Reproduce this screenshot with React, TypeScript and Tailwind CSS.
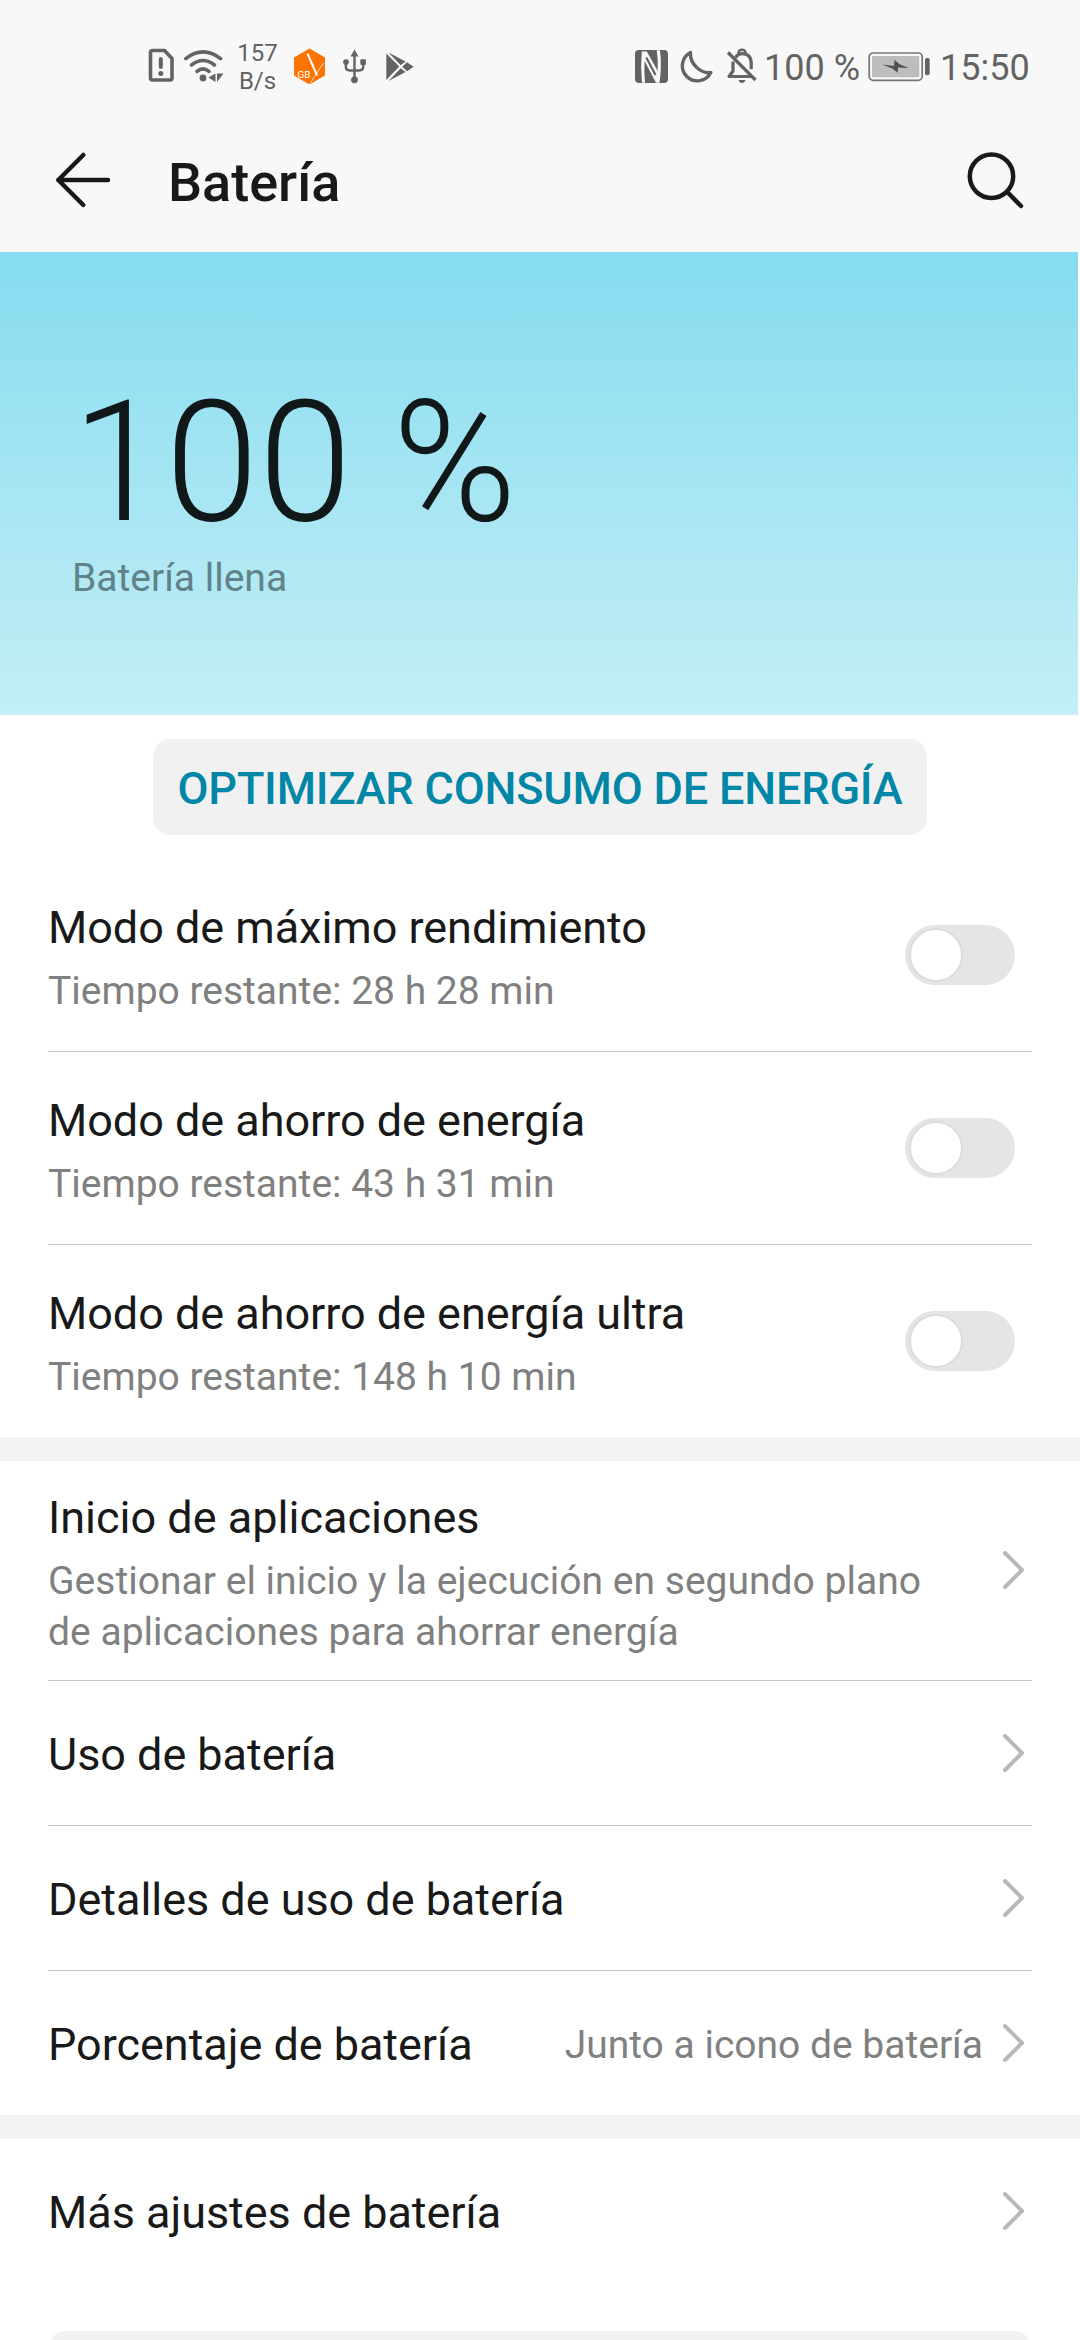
import type { ReactNode } from "react";

const G = "#636363";

function SimIcon() {
  return (
    <svg className="ml-[148px] h-9 w-[26px] shrink-0" viewBox="148 48 26 36" fill="none">
      <path d="M152 50.5h12.5l7.5 8V78a2 2 0 0 1-2 2h-17.500a2 2 0 0 1-2-2V52.500a2 2 0 0 1 2-2z" stroke={G} strokeWidth="3.600" strokeLinejoin="round" />
      <path d="M160.800 59v8" stroke={G} strokeWidth="4" strokeLinecap="round" />
      <circle cx="160.800" cy="73.500" r="2.500" fill={G} />
    </svg>
  );
}

function WifiIcon() {
  return (
    <svg className="ml-[10px] h-9 w-10 shrink-0" viewBox="184 48 40 36" fill="none">
      <g stroke={G} strokeWidth="3.600" strokeLinecap="round">
        <path d="M185.800 58.600Q203 45 220.500 58.600" />
        <path d="M191.500 65Q203 56 214.500 65" />
        <path d="M197 71.300Q203 66.500 209 71.300" />
      </g>
      <circle cx="203" cy="78" r="3.400" fill={G} />
      <path d="M215.500 73.500v8.500L208.500 77.500zM217 73.500h6.500L217 82z" fill={G} />
    </svg>
  );
}

function HexIcon() {
  return (
    <svg className="ml-4 h-9 w-8 shrink-0" viewBox="294 48 32 36">
      <path d="M309.500 48.500L325 57.500v18L309.500 84.500 294 75.500v-18z" fill="#ff7300" />
      <path d="M307.500 53.500L317 75.500" stroke="#fff" strokeWidth="2" />
      <path d="M323.500 63L310 83.500" stroke="#ffe3c8" strokeWidth="0.900" />
      <text x="297.500" y="77.800" fill="#fff" fontSize="9.500" fontFamily="Roboto, sans-serif" textLength="13" lengthAdjust="spacingAndGlyphs">GB</text>
    </svg>
  );
}

function UsbIcon() {
  return (
    <svg className="ml-4 h-9 w-6 shrink-0" viewBox="342 48 24 36" fill="none">
      <path d="M354.500 54v26M345.800 62v4.500q0 4 4 4h9.400q4 0 4-4V62" stroke={G} strokeWidth="2.400" />
      <path d="M354.500 49.500l4 7h-8z" fill={G} />
      <rect x="343.200" y="59.300" width="5.600" height="5.600" rx="2.300" fill={G} />
      <rect x="360.300" y="59.300" width="5.600" height="5.600" rx="1" fill={G} />
      <circle cx="354.500" cy="79.800" r="3.400" fill={G} />
    </svg>
  );
}

function PlayIcon() {
  return (
    <svg className="ml-5 h-9 w-7 shrink-0" viewBox="386 48 28 36" fill={G}>
      <path d="M386.300 53.500L399.300 66.500 386.300 80z" />
      <path d="M388.500 52.500L405.500 61.500 400.700 65.200z" />
      <path d="M388.500 81L400.700 68.200 405.500 72z" />
      <path d="M407 62.300L413.600 66.700 407 71.200 402.200 66.700z" />
    </svg>
  );
}

function NfcIcon() {
  return (
    <svg className="h-9 w-[34px] shrink-0" viewBox="635 48 34 36">
      <rect x="635" y="50" width="33" height="33" rx="4" fill={G} />
      <path d="M641.800 51.500Q640.300 67 642 82.800h3Q644 72 644.600 61L656 82.800h3.500Q662 66 660 50.200h-3.300Q658.300 60 657.700 71L646.800 51.500z" fill="#f8f8f8" />
      <path d="M646.300 57.500L655.500 75" stroke={G} strokeWidth="2.200" />
    </svg>
  );
}

function MoonIcon() {
  return (
    <svg className="ml-[11px] h-9 w-[34px] shrink-0" viewBox="680 48 34 36" fill="none">
      <path d="M690.500 52.500A15 15 0 1 0 710.800 72.500C701 74 689.500 64 690.500 52.500z" stroke={G} strokeWidth="3.400" strokeLinejoin="round" />
    </svg>
  );
}

function BellOffIcon() {
  return (
    <svg className="ml-3 h-9 w-[31px] shrink-0" viewBox="726 48 31 36" fill="none">
      <path d="M733 61.500v9.500l-4 5.500h23M735.500 57.500Q738 53.700 742 53.700q9.200 0 9.200 10v5.500" stroke={G} strokeWidth="3.200" strokeLinejoin="round" />
      <path d="M738.500 54v-1.500a3.500 2.800 0 0 1 7 0V54" stroke={G} strokeWidth="2.400" />
      <path d="M738.500 80h7q-1 3-3.500 3t-3.500-3z" fill={G} />
      <path d="M728 52.500L755.500 80" stroke={G} strokeWidth="3.200" />
    </svg>
  );
}

function BatteryIcon() {
  return (
    <svg className="h-9 w-[62px] shrink-0" viewBox="868 48 62 36" fill="none">
      <rect x="869.200" y="53" width="53" height="27.300" rx="4" stroke="#757575" strokeWidth="1.700" />
      <rect x="872" y="56" width="47.300" height="21.300" rx="1" fill="#bdbdbd" />
      <path d="M882.500 64.500l11.500 1.500.500-6.200 5 4.500 9.300 3.700-10.800-.6-.3 5.400-5.500-4.300z" fill="#4f4f4f" />
      <rect x="925" y="58" width="4.700" height="17.300" rx="1.800" fill={G} />
    </svg>
  );
}

function StatusBar() {
  return (
    <div className="flex h-[132px] items-center text-[#636363]">
      <SimIcon />
      <WifiIcon />
      <div className="ml-3 flex w-[42px] flex-col items-center pt-px pl-px text-[24px] leading-[28px]">
        <span>157</span>
        <span>B/s</span>
      </div>
      <HexIcon />
      <UsbIcon />
      <PlayIcon />
      <div className="ml-auto flex w-[445px] items-center text-[36px]">
        <NfcIcon />
        <MoonIcon />
        <BellOffIcon />
        <span className="ml-[7px] w-[104px] pt-1 leading-9 whitespace-nowrap">100 %</span>
        <BatteryIcon />
        <span className="ml-[10px] pt-1 leading-9 whitespace-nowrap">15:50</span>
      </div>
    </div>
  );
}

function Header() {
  return (
    <div className="flex h-[120px] items-start pt-[17px]">
      <svg className="ml-[54px] h-16 w-[58px]" viewBox="54 149 58 64" fill="none" stroke="#191919" strokeWidth="4.500" strokeLinecap="round" strokeLinejoin="round">
        <path d="M83.300 155L58.300 180l25 25M58.300 180H108" />
      </svg>
      <h1 className="ml-14 text-[54px] leading-[67px] font-medium">Batería</h1>
      <svg className="mr-[54px] ml-auto h-16 w-[60px]" viewBox="966 149 60 64" fill="none" stroke="#191919" strokeWidth="4.500" strokeLinecap="round">
        <circle cx="991.500" cy="176.200" r="21.700" />
        <path d="M1007.500 192.200L1021 206" />
      </svg>
    </div>
  );
}

function Switch() {
  return (
    <button type="button" role="switch" aria-checked="false" className="mr-[17px] flex h-[60px] w-[110px] shrink-0 items-center rounded-full bg-[#e5e5e5] pl-1">
      <span className="size-[54px] rounded-full border-2 border-[#dcdcdc] bg-white" />
    </button>
  );
}

function Chevron() {
  return (
    <svg className="mr-[6px] h-10 w-6 shrink-0" viewBox="0 0 24 40" fill="none" stroke="#b8b8b8" strokeWidth="4" strokeLinecap="round" strokeLinejoin="round">
      <path d="M3 3L20 20 3 37" />
    </svg>
  );
}

function ModeRow({ title, time, last }: { title: string; time: string; last?: boolean }) {
  return (
    <div className={last ? "flex h-[192px] items-center" : "flex h-[193px] items-center border-b border-[#c8c8c8]"}>
      <div className="flex-1 pt-[5px]">
        <div className="text-[45px] leading-[53px] tracking-[-0.04px]">{title}</div>
        <div className="mt-[14px] text-[39px] leading-[46px] text-[#808080]">Tiempo restante: {time}</div>
      </div>
      <Switch />
    </div>
  );
}

function LinkRow({ title, value, last }: { title: string; value?: string; last?: boolean }) {
  return (
    <div className={last ? "flex h-36 items-center" : "flex h-[145px] items-center border-b border-[#c8c8c8]"}>
      <span className="pt-[2px] text-[45px] leading-[53px] tracking-[-0.04px]">{title}</span>
      <span className="mr-[19px] ml-auto pt-1 text-[39px] leading-[46px] text-[#808080]">{value}</span>
      <Chevron />
    </div>
  );
}

function Section({ children }: { children: ReactNode }) {
  return <section className="px-12">{children}</section>;
}

const modes = [
  { title: "Modo de máximo rendimiento", time: "28 h 28 min" },
  { title: "Modo de ahorro de energía", time: "43 h 31 min" },
  { title: "Modo de ahorro de energía ultra", time: "148 h 10 min" },
];

export default function App() {
  return (
    <div className="h-[2340px] w-[1080px] overflow-hidden bg-white font-[Roboto,sans-serif] text-[#191919]">
      <header className="h-[252px] bg-[#f8f8f8]">
        <StatusBar />
        <Header />
      </header>

      <div className="mr-[2px] h-[463px] bg-linear-to-b from-[#85dcf0] to-[#c3eef5] px-[72px] pt-[121px]">
        <div className="text-[168px] leading-[180px] font-light text-[#10181a]">100 %</div>
        <div className="mt-[2px] text-[39px] leading-[46px] text-[#5f8389]">Batería llena</div>
      </div>

      <div className="flex h-36 justify-center pt-6">
        <button type="button" className="h-24 w-[774px] rounded-[18px] bg-[#f1f1f1] pt-[3px] text-[45px] leading-none font-medium tracking-[-0.18px] whitespace-nowrap text-[#0086a6]">
          OPTIMIZAR CONSUMO DE ENERGÍA
        </button>
      </div>

      <Section>
        {modes.map((m, i) => (
          <ModeRow key={m.title} title={m.title} time={m.time} last={i === modes.length - 1} />
        ))}
      </Section>
      <div className="h-6 bg-[#f3f3f3]" />
      <Section>
        <div className="flex h-[220px] items-center border-b border-[#c8c8c8]">
          <div className="flex-1 pt-[8px]">
            <div className="text-[45px] leading-[53px]">Inicio de aplicaciones</div>
            <div className="mt-3 text-[39px] leading-[51px] tracking-[0.02px] text-[#808080]">
              Gestionar el inicio y la ejecución en segundo plano
              <br />
              de aplicaciones para ahorrar energía
            </div>
          </div>
          <div className="pb-[2px]">
            <Chevron />
          </div>
        </div>
        <LinkRow title="Uso de batería" />
        <LinkRow title="Detalles de uso de batería" />
        <LinkRow title="Porcentaje de batería" value="Junto a icono de batería" last />
      </Section>
      <div className="h-6 bg-[#f3f3f3]" />
      <Section>
        <LinkRow title="Más ajustes de batería" last />
        <div className="mt-12 h-24 rounded-[18px] bg-[#f1f1f1]" />
      </Section>
    </div>
  );
}
